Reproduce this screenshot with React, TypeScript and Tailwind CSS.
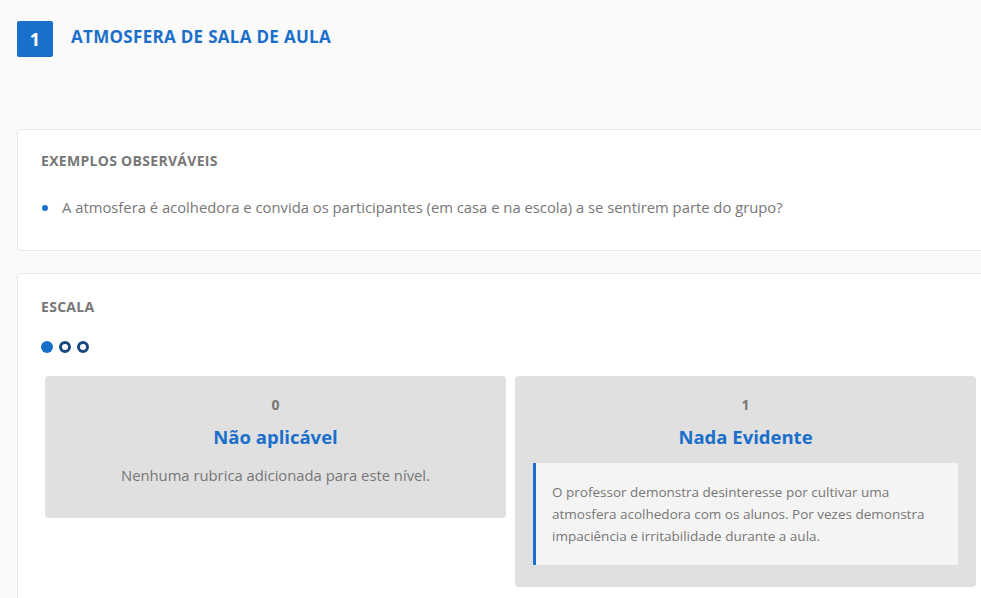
import React from 'react';

const levels = [
  { value: 0, title: 'Não aplicável', text: null as string | null },
  {
    value: 1,
    title: 'Nada Evidente',
    text: 'O professor demonstra desinteresse por cultivar uma atmosfera acolhedora com os alunos. Por vezes demonstra impaciência e irritabilidade durante a aula.',
  },
];

const App: React.FC = () => {
  return (
    <div
      className="w-[981px] h-[598px] overflow-hidden bg-[#fafafa]"
      style={{ fontFamily: '"Open Sans", Lato, sans-serif' }}
    >
      {/* header */}
      <div className="flex items-center gap-[18px] pl-[17px] pt-[21px]">
        <div className="w-[36px] h-[36px] rounded-[2px] bg-[#1a6fcb] text-white flex items-center justify-center text-[18px] font-bold">
          1
        </div>
        <h1 className="text-[#1a6fcb] text-[17px] leading-[22px] font-bold tracking-[0.3px] -mt-[5px]">ATMOSFERA DE SALA DE AULA</h1>
      </div>

      {/* examples */}
      <div className="ml-[17px] w-[1000px] mt-[72px] bg-white border border-[#e8e8e8] rounded-[4px] px-[23px] pt-[21px] pb-[32px]">
        <h3 className="text-[14px] leading-[20px] font-bold tracking-[0.3px] text-[#777] uppercase">Exemplos observáveis</h3>
        <ul className="mt-[25px]">
          <li className="flex items-center gap-[14px] text-[14.8px] leading-[22px] text-[#777]">
            <span className="w-[6px] h-[6px] rounded-full bg-[#1a6fcb] ml-[1px] mt-[2px]" />
            A atmosfera é acolhedora e convida os participantes (em casa e na escola) a se sentirem parte do grupo?
          </li>
        </ul>
      </div>

      {/* scale */}
      <div className="ml-[17px] w-[1000px] mt-[22px] bg-white border border-[#e8e8e8] rounded-[4px] px-[23px] pt-[23px] pb-[20px]">
        <h3 className="text-[14px] leading-[20px] font-bold tracking-[0.3px] text-[#777] uppercase">Escala</h3>
        <div className="flex gap-[6px] mt-[24px]">
          <span className="w-[12px] h-[12px] rounded-full bg-[#1a6fcb]" />
          <span className="w-[12px] h-[12px] rounded-full border-[3px] border-[#17497f]" />
          <span className="w-[12px] h-[12px] rounded-full border-[3px] border-[#17497f]" />
        </div>
        <div className="flex items-start gap-[9px] mt-[23px] ml-[4px]">
          {levels.map((l) => (
            <div key={l.value} className="shrink-0 w-[461px] bg-[#e0e0e0] rounded-[4px] px-[18px] pt-[19px] pb-[22px] text-center">
              <div className="text-[14px] leading-[20px] font-bold text-[#777]">{l.value}</div>
              <div className="mt-[9px] text-[18.5px] leading-[26px] font-bold text-[#1a6fcb]">{l.title}</div>
              {l.text ? (
                <div className="mt-[13px] bg-[#f4f4f4] border-l-[3px] border-[#1a6fcb] text-left px-[16px] py-[18px] text-[13.5px] leading-[22px] text-[#777]">
                  {l.text}
                </div>
              ) : (
                <div className="mt-[14px] pb-[10px] text-[14.8px] leading-[22px] text-[#777]">Nenhuma rubrica adicionada para este nível.</div>
              )}
            </div>
          ))}
        </div>
      </div>
    </div>
  );
};

export default App;
